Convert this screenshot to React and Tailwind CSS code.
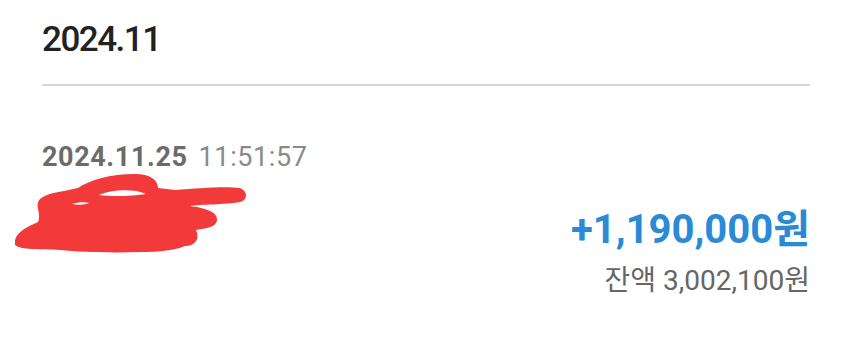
import React from 'react'

const font = { fontFamily: 'Roboto, "Noto Sans CJK KR", sans-serif' }

// redaction mark drawn over the memo line, in page coordinates
function Scribble() {
  return (
    <svg
      width="260"
      height="90"
      viewBox="0 170 260 90"
      className="absolute left-0 top-[170px]"
    >
      <path
        d="M15 240 C18 230 30 226 38 222 C42 214 34 205 40 199 C48 192 62 192 78 188 C90 180 110 174 135 174 C150 174 158 180 158 188 L175 190 C200 188 225 186 240 188 C248 191 248 200 240 202 C225 205 200 204 190 206 C205 208 218 212 217 220 C216 228 205 228 196 230 C200 238 196 246 185 246 C175 250 160 252 140 252 C110 253 80 252 60 250 C40 249 20 250 15 245 Z"
        fill="#f33a3a"
      />
      <path d="M99 195 C110 190 133 188 146 194 C133 196 112 197 99 195 Z" fill="#fff" />
      <path d="M72 204 C78 202 85 202 89 203 C85 205 78 205 72 204 Z" fill="#fff" />
    </svg>
  )
}

export default function App() {
  return (
    <div className="relative w-[850px] h-[347px] bg-white overflow-hidden" style={font}>
      <div className="pl-[42px] pr-[40px]">
        <div className="h-[84px] flex items-center pb-[6px]">
          <h2 className="text-[35px] leading-none font-medium text-[#222] tracking-[-1.5px]">2024.11</h2>
        </div>
        <div className="h-[2px] bg-[#d6d6d6]" />

        <div className="pt-[58px]">
          <div className="flex items-baseline gap-[11px] text-[27px] leading-none tracking-[0.6px]">
            <span className="font-bold text-[#6b6b6b]">2024.11.25</span>
            <span className="text-[#8a8a8a]">11:51:57</span>
          </div>

          <div className="flex justify-end mt-[39px]">
            <span className="text-[40px] leading-none font-bold text-[#2b8ad6]">+1,190,000원</span>
          </div>

          <div className="flex justify-end mt-[17px]">
            <span className="text-[28px] leading-none text-[#666]">잔액 3,002,100원</span>
          </div>
        </div>
      </div>
      <Scribble />
    </div>
  )
}
